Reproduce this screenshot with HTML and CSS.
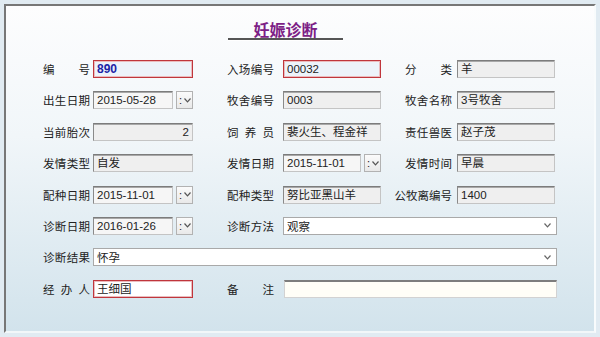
FILE: index.html
```html
<!DOCTYPE html>
<html lang="zh-CN">
<head>
    <meta charset="UTF-8">
    <title>妊娠诊断</title>
    <link rel="stylesheet" href="styles.css">
</head>
<body>
    <div class="panel">
        <div class="head">
            <h1 class="title">妊娠诊断</h1>
        </div>

        <div class="form">
            <!-- row 1 -->
            <span class="lbl">编号</span>
            <div class="field req key">890</div>
            <span class="lbl lbl2">入场编号</span>
            <div class="field req">00032</div>
            <span class="lbl3">分类</span>
            <div class="field">羊</div>

            <!-- row 2 -->
            <span class="lbl">出生日期</span>
            <div class="date">
                <div class="field dt">2015-05-28</div>
                <div class="drop">:<svg width="7" height="5" viewBox="0 0 7 5"><polyline points="0.5,0.5 3.5,3.8 6.5,0.5" fill="none" stroke="#555" stroke-width="1.2"/></svg></div>
            </div>
            <span class="lbl lbl2">牧舍编号</span>
            <div class="field">0003</div>
            <span class="lbl3">牧舍名称</span>
            <div class="field">3号牧舍</div>

            <!-- row 3 -->
            <span class="lbl">当前胎次</span>
            <div class="field num">2</div>
            <span class="lbl lbl2">饲养员</span>
            <div class="field">裴火生、程金祥</div>
            <span class="lbl3">责任兽医</span>
            <div class="field">赵子茂</div>

            <!-- row 4 -->
            <span class="lbl">发情类型</span>
            <div class="field">自发</div>
            <span class="lbl lbl2">发情日期</span>
            <div class="date">
                <div class="field dt">2015-11-01</div>
                <div class="drop">:<svg width="7" height="5" viewBox="0 0 7 5"><polyline points="0.5,0.5 3.5,3.8 6.5,0.5" fill="none" stroke="#555" stroke-width="1.2"/></svg></div>
            </div>
            <span class="lbl3">发情时间</span>
            <div class="field">早晨</div>

            <!-- row 5 -->
            <span class="lbl">配种日期</span>
            <div class="date">
                <div class="field dt">2015-11-01</div>
                <div class="drop">:<svg width="7" height="5" viewBox="0 0 7 5"><polyline points="0.5,0.5 3.5,3.8 6.5,0.5" fill="none" stroke="#555" stroke-width="1.2"/></svg></div>
            </div>
            <span class="lbl lbl2">配种类型</span>
            <div class="field">努比亚黑山羊</div>
            <span class="lbl3 long">公牧离编号</span>
            <div class="field">1400</div>

            <!-- row 6 -->
            <span class="lbl">诊断日期</span>
            <div class="date">
                <div class="field dt">2016-01-26</div>
                <div class="drop">:<svg width="7" height="5" viewBox="0 0 7 5"><polyline points="0.5,0.5 3.5,3.8 6.5,0.5" fill="none" stroke="#555" stroke-width="1.2"/></svg></div>
            </div>
            <span class="lbl lbl2">诊断方法</span>
            <div class="sel span-right">
                <span>观察</span>
                <svg width="7" height="5" viewBox="0 0 7 5"><polyline points="0.5,0.5 3.5,3.8 6.5,0.5" fill="none" stroke="#666" stroke-width="1.2"/></svg>
            </div>

            <!-- row 7 -->
            <span class="lbl">诊断结果</span>
            <div class="sel span-all">
                <span>怀孕</span>
                <svg width="7" height="5" viewBox="0 0 7 5"><polyline points="0.5,0.5 3.5,3.8 6.5,0.5" fill="none" stroke="#666" stroke-width="1.2"/></svg>
            </div>

            <!-- row 8 -->
            <span class="lbl">经办人</span>
            <div class="field req white">王细国</div>
            <span class="lbl lbl2">备注</span>
            <div class="field memo span-right"></div>
        </div>
    </div>
</body>
</html>
```

FILE: styles.css
```css
body {
    margin: 0;
    background-color: #e1ebf2;
    font-family: "Noto Sans CJK SC", sans-serif;
    color: #222;
}

.panel {
    margin: 4px;
    height: 329px;
    box-sizing: border-box;
    border: 2px solid;
    border-color: #777 #f8fbfc #f2f7f9 #777;
    background: linear-gradient(to bottom, #fdfdfe 0%, #f1f6f9 40%, #d2e3ec 100%);
}

.head {
    padding: 14px 0 0 222px;
}

.title {
    margin: 0;
    width: 115px;
    text-align: center;
    font-size: 16px;
    line-height: 18px;
    font-weight: bold;
    color: #7d1f86;
    border-bottom: 2px solid #555;
    box-shadow: 0 1px 0 #fff;
}

.form {
    display: grid;
    grid-template-columns: 50px 100px 90px 98px 76px 98px;
    grid-auto-rows: 18px;
    row-gap: 13.4px;
    margin: 20px 0 0 37px;
}

/* labels */

.lbl {
    font-size: 11.5px;
    line-height: 18px;
    white-space: nowrap;
    padding-right: 3px;
    text-align: justify;
    text-align-last: justify;
}

.lbl2 {
    padding-left: 34px;
    padding-right: 9px;
}

.lbl3 {
    justify-self: end;
    width: 47px;
    margin-right: 5px;
    font-size: 11.5px;
    line-height: 18px;
    white-space: nowrap;
    text-align: justify;
    text-align-last: justify;
}

.lbl3.long {
    width: auto;
    text-align-last: auto;
}

/* fields */

.field {
    box-sizing: border-box;
    height: 18px;
    line-height: 16px;
    padding: 0 3px;
    font-family: "Liberation Sans", "Noto Sans CJK SC", sans-serif;
    font-size: 11.5px;
    color: #222;
    white-space: nowrap;
    overflow: hidden;
    border: 1px solid #c4c4c4;
    border-top-color: #7c7c7c;
    border-left-color: #8a8a8a;
    box-shadow: inset 0 1px 0 #a8a8a8;
    background-color: #efefef;
}

.req {
    border: 1px solid #c0363c;
    box-shadow: inset 0 0 0 1px #ebbcbe;
    background-color: #edf3fa;
}

.key {
    font-size: 12px;
    font-weight: bold;
    color: #1c24a6;
}

.white {
    background-color: #fff;
}

.num {
    text-align: right;
}

.date {
    display: flex;
    gap: 3px;
}

.dt {
    flex: 1;
    background-color: #f6f6f6;
}

.drop {
    box-sizing: border-box;
    width: 17px;
    height: 18px;
    display: flex;
    align-items: center;
    gap: 2px;
    padding-left: 2px;
    font-family: "Liberation Sans", sans-serif;
    font-size: 11px;
    border: 1px solid #b2b2b2;
    background: linear-gradient(to bottom, #fbfbfb, #e9e9e9);
}

.sel {
    box-sizing: border-box;
    height: 18px;
    display: flex;
    align-items: center;
    justify-content: space-between;
    padding: 0 5px 0 3px;
    font-size: 11.5px;
    background-color: #fff;
    border: 1px solid #a9a9a9;
}

.span-right {
    grid-column: 4 / 7;
    margin-right: -2px;
}

.span-all {
    grid-column: 2 / 7;
    margin-right: -2px;
}

.memo {
    margin-left: 1px;
    border: 1px solid #d2d2d2;
    border-top: 2px solid #7d7d7d;
    box-shadow: none;
    background-color: #fffef7;
}
```
